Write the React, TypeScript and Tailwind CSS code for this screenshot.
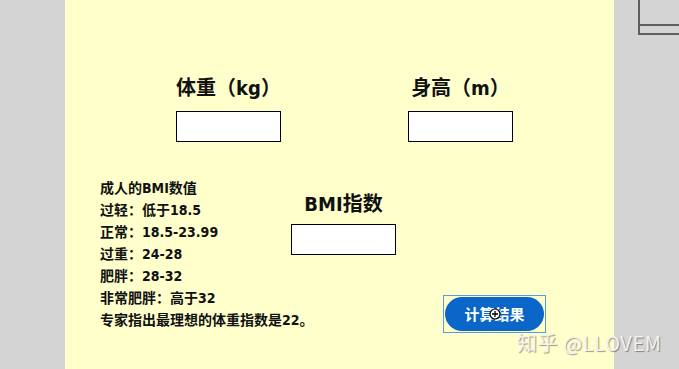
const font = "font-['DejaVu_Sans_Condensed','DejaVu_Sans','Noto_Sans_CJK_SC',sans-serif]";

const ranges = [
  "成人的BMI数值",
  "过轻：低于18.5",
  "正常：18.5-23.99",
  "过重：24-28",
  "肥胖：28-32",
  "非常肥胖：高于32",
  "专家指出最理想的体重指数是22。",
];

const Field = ({ label, gap }: { label: string; gap: string }) => (
  <div className="flex flex-col items-center w-[105px]">
    <div className="h-[28px] leading-[28px] text-[20px] font-bold whitespace-nowrap">{label}</div>
    <div className={`${gap} w-[105px] h-[31px] bg-white border border-black`} />
  </div>
);

export default function App() {
  return (
    <div className={`relative w-full h-[369px] overflow-hidden bg-[#d4d4d4] flex text-[#111] ${font}`}>
      <div className="w-[65px] shrink-0" />
      <div className="w-[549px] shrink-0 bg-[#ffffcc] pt-[74px]">
        <div className="flex">
          <div className="ml-[111px]">
            <Field label="体重（kg）" gap="mt-[9px]" />
          </div>
          <div className="ml-[127px]">
            <Field label="身高（m）" gap="mt-[9px]" />
          </div>
        </div>

        <div className="flex mt-[34px]">
          <div className="ml-[35px] w-[191px] text-[14px] font-bold leading-[22px] whitespace-nowrap pt-[1px]">
            {ranges.map((r) => (
              <div key={r}>{r}</div>
            ))}
          </div>
          <div className="pt-[14px]">
            <Field label="BMI指数" gap="mt-[6px]" />
          </div>
          <div className="ml-[47px] pt-[119px]">
            <div className="relative w-[103px] h-[38px] border border-[#5b9bd5] p-[1px]">
              <button className="w-full h-full rounded-full bg-[#0a66c8] text-white text-[15px] font-bold font-['Noto_Sans_CJK_SC',sans-serif]">
                计算结果
              </button>
              {/* move cursor */}
              <svg className="absolute left-[45px] top-[12px]" width="12" height="12" viewBox="0 0 12 12">
                <circle cx="6" cy="6" r="5" fill="white" stroke="black" strokeWidth="1.2" />
                <path d="M6 3v6M3 6h6" stroke="black" strokeWidth="1.3" />
              </svg>
            </div>
          </div>
        </div>
      </div>
      <div className="flex-1">
        <div className="ml-[24px] h-[35px] border-l-2 border-b-2 border-[#5e5e5e]">
          <div className="h-[26px] border-b-2 border-[#5e5e5e]" />
        </div>
      </div>

      <div className="absolute left-[517px] top-[328px] text-[20px] tracking-[0.6px] text-[#f2f2f2] font-['Noto_Sans_CJK_SC',sans-serif] whitespace-nowrap [text-shadow:1px_1px_1px_rgba(0,0,0,0.4)]">
        知乎 @LLOVEM
      </div>
    </div>
  );
}
